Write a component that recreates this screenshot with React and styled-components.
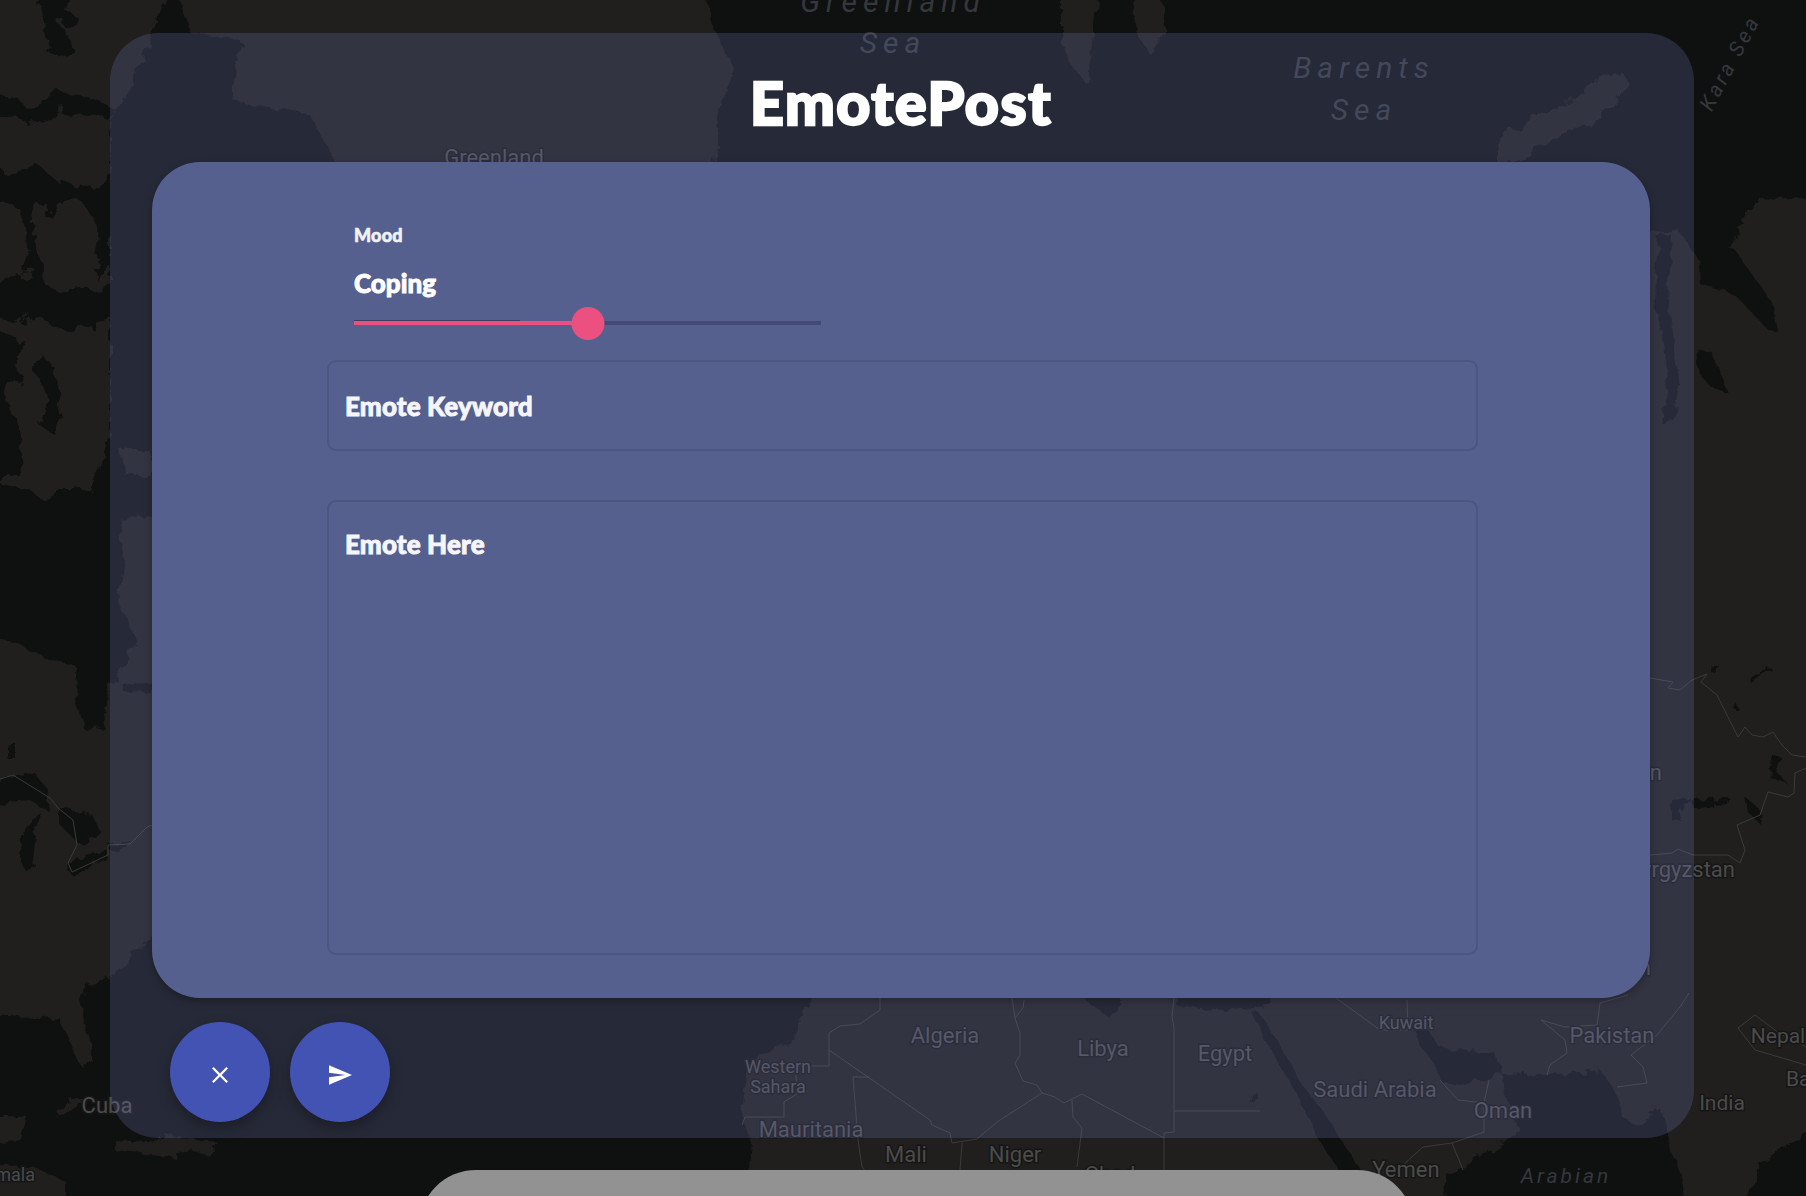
import styled, { createGlobalStyle } from "styled-components";

const GlobalStyle = createGlobalStyle`
  html, body {
    margin: 0;
    padding: 0;
    background: #0f1110;
    font-family: "Lato", "Noto Sans", sans-serif;
  }
  * { box-sizing: border-box; }
`;

const Page = styled.div`
  position: relative;
  width: 1806px;
  height: 1196px;
  overflow: hidden;
  display: flex;
  flex-direction: column;
  align-items: center;
  padding-top: 33px;
`;

const MapLayer = styled.svg`
  position: absolute;
  inset: 0;
  width: 1806px;
  height: 1196px;
`;

const Modal = styled.section`
  position: relative;
  width: 1584px;
  height: 1105px;
  margin-left: -2px;
  padding: 0 44px 0 42px;
  border-radius: 48px;
  background: rgba(130, 142, 216, 0.2);
  flex-shrink: 0;
`;

const Header = styled.header`
  height: 129px;
  padding-top: 9px;
  display: flex;
  align-items: center;
  justify-content: center;
`;

const Title = styled.h1`
  margin: 0;
  font-size: 59px;
  font-weight: 900;
  line-height: 1;
  color: #fff;
  -webkit-text-stroke: 2.4px #fff;
  letter-spacing: 1.6px;
`;

const Card = styled.div`
  height: 836px;
  padding: 62px 174px 0 175px;
  border-radius: 48px;
  background: #55608f;
  box-shadow: 0 3px 8px rgba(0, 0, 0, 0.28);
`;

const MoodBlock = styled.div`
  padding-left: 27px;
`;

const MoodLabel = styled.div`
  font-size: 18px;
  line-height: 22px;
  font-weight: 900;
  letter-spacing: 0.2px;
  color: #f1f2f6;
  -webkit-text-stroke: 0.6px #f1f2f6;
`;

const MoodValue = styled.div`
  margin-top: 21px;
  font-size: 26px;
  line-height: 32px;
  font-weight: 900;
  color: #fff;
  -webkit-text-stroke: 0.9px #fff;
`;

const Track = styled.div`
  position: relative;
  width: 467px;
  height: 4px;
  margin-top: 22px;
  background: #434a74;
`;

const TrackFill = styled.div`
  height: 100%;
  background: #ec5080;
`;

const TrackMark = styled.div`
  position: absolute;
  left: 0;
  top: -1px;
  width: 166px;
  height: 1px;
  background: #3d3f60;
`;

const Thumb = styled.div`
  position: absolute;
  top: -14px;
  width: 33px;
  height: 33px;
  border-radius: 50%;
  background: #ec5080;
  transform: translateX(-50%);
`;

const fieldStyles = `
  display: block;
  width: 1151px;
  padding: 0 16px;
  border: 2px solid #4d5581;
  border-radius: 9px;
  background: transparent;
  outline: none;
  resize: none;
  font-family: "Lato", "Noto Sans", sans-serif;
  font-size: 26px;
  font-weight: 900;
  letter-spacing: 0.15px;
  color: #fff;
  -webkit-text-stroke: 0.9px #f6f6fa;
  &::placeholder {
    color: #f6f6fa;
    opacity: 1;
  }
`;

const KeywordInput = styled.input`
  ${fieldStyles}
  height: 91px;
  margin-top: 35px;
`;

const EmoteArea = styled.textarea`
  ${fieldStyles}
  height: 455px;
  margin-top: 49px;
  padding-top: 26px;
  line-height: 32px;
`;

const Actions = styled.div`
  display: flex;
  gap: 20px;
  margin-top: 24px;
  padding-left: 18px;
`;

const RoundButton = styled.button`
  width: 100px;
  height: 100px;
  padding: 6px 0 0;
  border: none;
  border-radius: 50%;
  background: #4353b3;
  box-shadow: 0 6px 14px rgba(0, 0, 0, 0.28);
  display: flex;
  align-items: center;
  justify-content: center;
  color: #fff;
`;

const Sheet = styled.div`
  position: relative;
  flex-shrink: 0;
  width: 995px;
  height: 140px;
  margin-top: 32px;
  margin-left: 27px;
  border-radius: 57px 57px 0 0;
  background: #929292;
`;

const land = [
  "M172,-20 L700,-20 L715,33 L735,70 L722,100 L712,170 L340,170 L310,115 L232,100 L242,42 L190,33 Z",
  "M-20,-20 L172,-20 L150,40 L130,90 L110,120 L110,440 L90,490 L60,490 L42,500 L30,490 L-20,480 Z",
  "M-20,630 L20,645 L50,660 L75,665 L76,700 L85,730 L105,728 L108,690 L125,665 L135,640 L118,600 L125,560 L118,520 L160,515 L160,925 L109,980 L105,975 L85,985 L80,1000 L92,1060 L85,1070 L75,1055 L60,1018 L-20,1015 Z",
  "M120,450 L150,450 L150,475 L125,475 Z",
  "M55,1110 L70,1099 L85,1099 L88,1104 L72,1106 L60,1116 Z",
  "M-20,1117 L28,1117 L22,1140 L-20,1146 Z",
  "M-20,1167 L30,1165 L66,1182 L66,1210 L-20,1210 Z",
  "M115,1140 L150,1142 L170,1137 L218,1142 L210,1155 L178,1150 L175,1157 L115,1150 Z",
  "M1062,-10 L1098,-10 L1090,60 L1088,86 L1075,70 L1062,45 Z",
  "M1130,-10 L1162,-10 L1166,30 L1150,55 L1135,30 Z",
  "M1622,72 L1630,85 L1600,118 L1560,135 L1525,160 L1490,170 L1500,140 L1530,118 L1570,100 L1600,80 Z",
  "M1830,195 L1760,200 L1745,218 L1728,252 L1700,262 L1680,232 L1650,230 L1000,300 L818,990 L800,1020 L787,1045 L760,1052 L745,1080 L742,1120 L752,1140 L750,1170 L762,1210 L1830,1210 Z",
];

const northChannels = [
  "M40,-20 L62,-20 L78,10 L58,22 L72,50 L50,56 L44,28 Z",
  "M-20,88 L30,104 L60,92 L115,108 L112,124 L70,112 L28,124 L-20,112 Z",
  "M-20,172 L36,164 L62,186 L115,176 L115,204 L70,202 L30,212 L-20,198 Z",
  "M20,205 L42,196 L34,240 L44,284 L22,288 L28,246 Z",
  "M82,200 L112,196 L112,268 L92,276 L100,238 Z",
  "M-20,286 L32,276 L64,296 L115,282 L115,318 L72,328 L32,314 L-20,322 Z",
  "M-20,333 L24,340 L12,400 L22,480 L-20,480 Z",
  "M34,372 L50,362 L64,396 L54,434 L38,424 L46,398 Z",
];

const water = [
  "M-20,790 L15,775 L35,773 L48,790 L50,812 L30,800 L-20,805 Z",
  "M20,835 L40,810 L34,862 L26,872 L19,860 Z",
  "M60,808 L92,815 L100,832 L85,846 L75,840 L60,825 Z",
  "M65,862 L108,850 L108,858 L72,876 Z",
  "M107,845 L130,840 L126,848 L110,851 Z",
  "M6,745 L16,743 L16,758 L6,758 Z",
  "M123,685 L150,680 L150,692 L125,693 Z",
  "M1658,232 L1672,235 L1668,300 L1680,380 L1672,425 L1662,425 L1668,370 L1655,300 Z",
  "M1698,240 L1735,250 L1770,300 L1778,333 L1768,330 L1740,300 L1725,290 L1700,285 Z",
  "M1695,347 L1710,350 L1727,392 L1712,388 L1700,375 Z",
  "M1710,665 L1718,665 L1716,674 L1710,672 Z",
  "M1750,680 L1770,667 L1772,670 L1752,684 Z",
  "M1735,702 L1738,708 L1733,708 Z",
  "M1772,755 L1782,757 L1775,770 L1786,782 L1770,778 Z",
  "M1690,800 L1730,798 L1728,804 L1692,806 Z",
  "M1672,800 L1690,798 L1680,820 L1672,822 Z",
  "M1745,797 L1760,810 L1758,822 L1748,812 Z",
  "M1076,990 L1122,990 L1122,1006 L1108,1016 L1092,1006 Z",
  "M1177,990 L1270,990 L1270,1006 L1240,1008 L1225,1010 L1177,1006 Z",
  "M1250,1010 L1258,1012 L1278,1042 L1302,1085 L1322,1110 L1340,1138 L1362,1172 L1340,1172 L1318,1138 L1300,1100 L1268,1045 Z",
  "M1410,1023 L1425,1025 L1440,1048 L1470,1050 L1495,1053 L1501,1073 L1485,1080 L1460,1085 L1440,1082 L1435,1065 L1420,1045 Z",
  "M1501,1073 L1547,1075 L1600,1070 L1615,1090 L1625,1120 L1640,1125 L1660,1108 L1668,1140 L1690,1210 L1440,1210 L1449,1177 L1501,1143 L1518,1127 L1505,1095 Z",
  "M1745,1210 L1760,1165 L1806,1133 L1830,1133 L1830,1210 Z",
  "M1250,1105 L1255,1090 L1258,1098 Z",
];

const borders = [
  "M-10,782 L13,775 L50,798 L58,808 L73,820 L77,845 L68,863 L72,872 L108,855 L108,845 L130,844 L147,827 L152,825",
  "M880,998 L880,1010 L860,1024 L840,1026 L829,1033 L829,1066 L812,1066",
  "M829,1050 L930,1120 L932,1125 L950,1133 L952,1143 L977,1139 L997,1122 L1042,1093 L1055,1097 L1064,1103 L1082,1094 L1164,1138",
  "M1012,998 L1015,1018 L1020,1033 L1020,1055 L1015,1063 L1023,1081 L1037,1085 L1042,1093",
  "M1024,1000 L1023,1008 L1015,1018",
  "M1174,998 L1172,1017 L1174,1027 L1174,1132 L1164,1133 L1164,1170",
  "M1174,1111 L1260,1111",
  "M869,1077 L853,1077 L858,1140 L862,1167 L866,1172",
  "M962,1143 L960,1170",
  "M1072,1100 L1073,1117 L1082,1128 L1077,1167",
  "M796,1075 L797,1094 L784,1102 L784,1117 L745,1117 L742,1125",
  "M1336,998 L1380,1030 L1408,1030 L1407,1000",
  "M1541,1020 L1565,1027 L1597,1025 L1600,1003 L1628,995",
  "M1541,1020 L1565,1040 L1567,1053 L1550,1065 L1547,1075",
  "M1689,993 L1680,1007 L1657,1035 L1631,1055 L1643,1067 L1647,1083 L1617,1087",
  "M1440,1080 L1458,1100 L1484,1103 L1484,1132 L1452,1143 L1423,1147 L1403,1165",
  "M1452,1143 L1463,1170",
  "M1489,1080 L1484,1103",
  "M1738,1028 L1755,1015 L1779,1033 L1806,1047",
  "M1738,1028 L1755,1050 L1806,1065",
  "M1650,678 L1673,682 L1668,688 L1680,690 L1692,680 L1707,674 L1701,682 L1717,695 L1738,737 L1745,727 L1752,735 L1763,737 L1773,732 L1782,745 L1792,755 L1806,757",
  "M1806,768 L1795,773 L1794,793 L1788,797 L1768,792 L1760,815 L1737,825 L1745,850 L1740,863 L1728,855 L1693,855 L1678,849 L1672,853 L1650,855",
];

const labels = [
  { text: "Greenland", x: 893, y: 12, size: 30, sea: true, spacing: 6 },
  { text: "Sea", x: 893, y: 53, size: 30, sea: true, spacing: 6 },
  { text: "Barents", x: 1364, y: 78, size: 30, sea: true, spacing: 6 },
  { text: "Sea", x: 1364, y: 120, size: 30, sea: true, spacing: 6 },
  { text: "Arabian", x: 1566, y: 1183, size: 21, sea: true, spacing: 3 },
  { text: "Greenland", x: 494, y: 165, size: 22 },
  { text: "Algeria", x: 945, y: 1043, size: 22 },
  { text: "Libya", x: 1103, y: 1056, size: 22 },
  { text: "Egypt", x: 1225, y: 1061, size: 22 },
  { text: "Kuwait", x: 1406, y: 1029, size: 18 },
  { text: "Pakistan", x: 1612, y: 1043, size: 22 },
  { text: "Nepal", x: 1778, y: 1043, size: 21 },
  { text: "Bangladesh", x: 1786, y: 1086, size: 21, anchor: "start" },
  { text: "India", x: 1722, y: 1110, size: 21 },
  { text: "Saudi Arabia", x: 1375, y: 1097, size: 22 },
  { text: "Oman", x: 1503, y: 1118, size: 22 },
  { text: "Yemen", x: 1406, y: 1177, size: 22 },
  { text: "Western", x: 778, y: 1073, size: 18 },
  { text: "Sahara", x: 778, y: 1093, size: 18 },
  { text: "Mauritania", x: 811, y: 1137, size: 22 },
  { text: "Mali", x: 906, y: 1162, size: 22 },
  { text: "Niger", x: 1015, y: 1162, size: 22 },
  { text: "Chad", x: 1110, y: 1182, size: 22 },
  { text: "Cuba", x: 107, y: 1113, size: 22 },
  { text: "Guatemala", x: 35, y: 1181, size: 18, anchor: "end" },
  { text: "Kyrgyzstan", x: 1735, y: 877, size: 22, anchor: "end" },
  { text: "Kazakhstan", x: 1662, y: 780, size: 22, anchor: "end" },
  { text: "Afghanistan", x: 1651, y: 975, size: 22, anchor: "end" },
];

const MapBackdrop = () => (
  <MapLayer viewBox="0 0 1806 1196" aria-hidden="true">
    <defs>
      <filter id="coast" filterUnits="userSpaceOnUse" x="-40" y="-40" width="1890" height="1280" colorInterpolationFilters="sRGB">
        <feTurbulence type="fractalNoise" baseFrequency="0.07" numOctaves="4" seed="7" result="noise" />
        <feDisplacementMap in="SourceGraphic" in2="noise" scale="12" />
      </filter>
      <filter id="fjords" filterUnits="userSpaceOnUse" x="-40" y="-40" width="300" height="600" colorInterpolationFilters="sRGB">
        <feTurbulence type="fractalNoise" baseFrequency="0.035" numOctaves="5" seed="3" result="noise" />
        <feDisplacementMap in="SourceGraphic" in2="noise" scale="34" />
      </filter>
    </defs>
    <rect width="1806" height="1196" fill="#0f1110" />
    <g filter="url(#coast)">
      {land.map((d, i) => <path key={i} d={d} fill="#201f1d" />)}
      {water.map((d, i) => <path key={i} d={d} fill="#0f1110" />)}
    </g>
    <g filter="url(#fjords)">
      {northChannels.map((d, i) => <path key={i} d={d} fill="#0f1110" />)}
    </g>
    <g fill="none" stroke="#3a3a3a" strokeWidth="1">
      {borders.map((d, i) => <path key={i} d={d} />)}
    </g>
    <g fontFamily="'Liberation Sans Narrow', Roboto, sans-serif">
      {labels.map((l) => (
        <text
          key={l.text + l.y}
          x={l.x}
          y={l.y}
          fontSize={l.size}
          textAnchor={l.anchor || "middle"}
          fontStyle={l.sea ? "italic" : "normal"}
          letterSpacing={l.spacing || 0}
          fill={l.sea ? "#35373d" : "#4b4b4b"}
          stroke={l.sea ? "none" : "#161616"}
          strokeWidth={l.sea ? 0 : 3}
          paintOrder="stroke"
        >
          {l.text}
        </text>
      ))}
      <text
        x="0"
        y="0"
        fontSize="21"
        fontStyle="italic"
        letterSpacing="3"
        textAnchor="middle"
        fill="#35373d"
        transform="translate(1736 66) rotate(-62)"
      >
        Kara Sea
      </text>
    </g>
  </MapLayer>
);

const CloseIcon = () => (
  <svg width="16" height="16" viewBox="5 5 14 14" fill="#fff">
    <path d="M19 6.41L17.59 5 12 10.59 6.41 5 5 6.41 10.59 12 5 17.59 6.41 19 12 13.41 17.59 19 19 17.59 13.41 12z" />
  </svg>
);

const SendIcon = () => (
  <svg width="23" height="20" viewBox="2 3 21 18" fill="#fff">
    <path d="M2.01 21L23 12 2.01 3 2 10l15 2-15 2z" />
  </svg>
);

export default function App() {
  const moodPosition = 234;

  return (
    <Page>
      <GlobalStyle />
      <MapBackdrop />
      <Modal>
        <Header>
          <Title>EmotePost</Title>
        </Header>
        <Card>
          <MoodBlock>
            <MoodLabel>Mood</MoodLabel>
            <MoodValue>Coping</MoodValue>
            <Track>
              <TrackFill style={{ width: moodPosition }} />
              <TrackMark />
              <Thumb style={{ left: moodPosition }} />
            </Track>
          </MoodBlock>
          <KeywordInput placeholder="Emote Keyword" />
          <EmoteArea placeholder="Emote Here" />
        </Card>
        <Actions>
          <RoundButton aria-label="Close"><CloseIcon /></RoundButton>
          <RoundButton aria-label="Send"><SendIcon /></RoundButton>
        </Actions>
      </Modal>
      <Sheet />
    </Page>
  );
}
